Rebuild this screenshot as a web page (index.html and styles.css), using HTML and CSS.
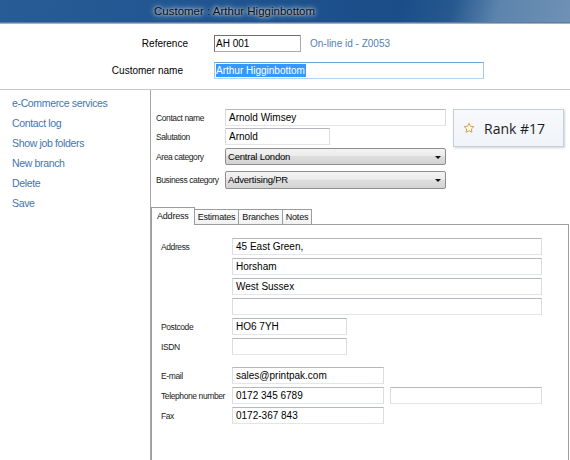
FILE: index.html
```html
<!DOCTYPE html>
<html>
<head>
  <title>Customer : Arthur Higginbottom</title>
  <link rel="stylesheet" href="styles.css">
</head>
<body>

<div class="titlebar">Customer : Arthur Higginbottom</div>

<div class="header">
  <div class="hdr-row">
    <span class="hdr-label">Reference</span>
    <div class="field ref-field">AH 001</div>
    <span class="online">On-line id - Z0053</span>
  </div>
  <div class="hdr-row">
    <span class="hdr-label short">Customer name</span>
    <div class="field name-field"><span class="sel">Arthur Higginbottom</span></div>
  </div>
</div>

<div class="main">
  <!-- left links -->
  <div class="sidebar">
    <a href="#">e-Commerce services</a>
    <a href="#">Contact log</a>
    <a href="#">Show job folders</a>
    <a href="#">New branch</a>
    <a href="#">Delete</a>
    <a href="#">Save</a>
  </div>

  <div class="content">
    <div class="top">
      <div class="contact-form">
        <div class="row">
          <span class="lbl">Contact name</span>
          <div class="field w-long">Arnold Wimsey</div>
        </div>
        <div class="row">
          <span class="lbl">Salutation</span>
          <div class="field w-short">Arnold</div>
        </div>
        <div class="row gap-s">
          <span class="lbl">Area category</span>
          <div class="select w-long">Central London<span class="arrow"></span></div>
        </div>
        <div class="row gap-m">
          <span class="lbl">Business category</span>
          <div class="select w-long tall">Advertising/PR<span class="arrow"></span></div>
        </div>
      </div>

      <div class="rank-card">
        <svg class="star" width="12" height="12" viewBox="0 0 24 24">
          <path d="M12 2.5l2.9 6.1 6.6.8-4.9 4.6 1.3 6.6L12 17.3l-5.9 3.3 1.3-6.6-4.9-4.6 6.6-.8z" fill="#fffbea" stroke="#c9993a" stroke-width="1.8" stroke-linejoin="round"/>
        </svg>
        <span>Rank #17</span>
      </div>
    </div>

    <div class="tabs">
      <div class="tab active">Address</div>
      <div class="tab">Estimates</div>
      <div class="tab">Branches</div>
      <div class="tab">Notes</div>
    </div>

    <div class="panel">
      <div class="row">
        <span class="lbl wide">Address</span>
        <div class="field w-addr">45 East Green,</div>
      </div>
      <div class="row">
        <span class="lbl wide"></span>
        <div class="field w-addr">Horsham</div>
      </div>
      <div class="row">
        <span class="lbl wide"></span>
        <div class="field w-addr">West Sussex</div>
      </div>
      <div class="row">
        <span class="lbl wide"></span>
        <div class="field w-addr"></div>
      </div>
      <div class="row">
        <span class="lbl wide">Postcode</span>
        <div class="field w-post">HO6 7YH</div>
      </div>
      <div class="row">
        <span class="lbl wide">ISDN</span>
        <div class="field w-post"></div>
      </div>
      <div class="row gap-l">
        <span class="lbl wide">E-mail</span>
        <div class="field w-mid">sales@printpak.com</div>
      </div>
      <div class="row">
        <span class="lbl wide">Telephone number</span>
        <div class="field w-mid">0172 345 6789</div>
        <div class="field w-mid extra"></div>
      </div>
      <div class="row">
        <span class="lbl wide">Fax</span>
        <div class="field w-mid">0172-367 843</div>
      </div>
    </div>
  </div>
</div>

</body>
</html>
```

FILE: styles.css
```css
body {
  margin: 0;
  width: 570px;
  height: 460px;
  overflow: hidden;
  background: #fff;
  font-family: "Liberation Sans", Arial, sans-serif;
  color: #000;
}

/* Title bar */
.titlebar {
  height: 22px;
  line-height: 22px;
  padding-left: 154px;
  font-size: 11.5px;
  color: #0d0d0d;
  text-shadow: 0 0 6px rgba(255,255,255,0.95), 0 0 3px rgba(255,255,255,0.8);
  background: linear-gradient(105deg, #285c96 0%, #1f5490 40%, #1b4d88 70%, #27598f 79%, #5d84ad 87%, #6f91b4 100%);
  border-bottom: 1px solid #5a7fa7;
}

/* Header */
.header {
  border-top: 1px solid #a6b1bd;
  padding: 11px 0 10px;
  border-bottom: 1px solid #c6c6c6;
}

.hdr-row {
  display: flex;
  align-items: center;
  height: 17px;
}

.hdr-row + .hdr-row {
  margin-top: 10px;
}

.hdr-label {
  width: 188px;
  margin-right: 26px;
  text-align: right;
  font-size: 10px;
}

.hdr-label.short {
  width: 183px;
  margin-right: 31px;
}

.field {
  box-sizing: border-box;
  height: 17px;
  line-height: 15px;
  padding-left: 3px;
  font-size: 10px;
  white-space: nowrap;
  border: 1px solid;
  border-color: #b4b8be #dadee3 #e2e5e9 #dadee3;
  background: #fff;
}

.ref-field {
  width: 87px;
  padding-left: 1px;
  border-color: #6e6e6e #a9a9a9 #a9a9a9 #6e6e6e;
}

.online {
  margin-left: 9px;
  font-size: 10px;
  color: #4f80b6;
}

.name-field {
  width: 270px;
  padding-left: 1px;
  border-color: #6ea0d4 #a9c7e6 #b5d0ec #a9c7e6;
}

.sel {
  background: #3399ff;
  color: #fff;
  padding: 1px 1px 1px 0;
}

/* Main area */
.main {
  display: flex;
  height: 370px;
}

.sidebar {
  box-sizing: border-box;
  width: 151px;
  padding-top: 3px;
  border-right: 1px solid #a8a8a8;
}

.sidebar a {
  display: block;
  padding-left: 12px;
  line-height: 20px;
  font-size: 10.5px;
  letter-spacing: -0.35px;
  color: #3f75ae;
  text-decoration: none;
}

.content {
  flex: 1;
  display: flex;
  flex-direction: column;
}

.top {
  display: flex;
  align-items: flex-start;
  padding: 19px 0 0 5px;
}

.contact-form {
  width: 290px;
}

.row {
  display: flex;
  align-items: center;
}

.contact-form .row + .row {
  margin-top: 2px;
}

.contact-form .row.gap-s {
  margin-top: 3px;
}

.contact-form .row.gap-m {
  margin-top: 6px;
}

.lbl {
  width: 69px;
  flex-shrink: 0;
  font-size: 8.5px;
  letter-spacing: -0.4px;
  color: #1a1a1a;
}

.lbl.wide {
  width: 71px;
}

.w-long { width: 221px; }
.w-short { width: 105px; }
.w-addr { width: 310px; }
.w-post { width: 115px; }
.w-mid { width: 152px; }

.extra {
  margin-left: 6px;
}

.select {
  position: relative;
  box-sizing: border-box;
  height: 17px;
  line-height: 15px;
  padding-left: 2px;
  font-size: 9.5px;
  letter-spacing: -0.2px;
  border: 1px solid #8d8d8d;
  border-radius: 2px;
  background: linear-gradient(#f3f3f3, #ececec 45%, #dedede 50%, #d2d2d2);
}

.select.tall {
  height: 18px;
  line-height: 16px;
}

.arrow {
  position: absolute;
  right: 4px;
  top: 50%;
  margin-top: -1px;
  border-left: 3px solid transparent;
  border-right: 3px solid transparent;
  border-top: 3px solid #111;
}

/* Rank card */
.rank-card {
  box-sizing: border-box;
  width: 111px;
  height: 38px;
  margin-left: 7px;
  display: flex;
  align-items: center;
  padding-left: 9px;
  font-family: "Open Sans", "Liberation Sans", sans-serif;
  font-size: 14px;
  color: #1c1c1c;
  background: linear-gradient(#f8f9fc, #f0f3f8);
  border: 1px solid #c6ceda;
  box-shadow: 1px 1px 2px rgba(120,130,150,0.35);
}

.star {
  margin-right: 9px;
}

/* Tabs */
.tabs {
  display: flex;
  align-items: flex-end;
  margin-top: 18px;
  margin-bottom: -1px;
  position: relative;
  z-index: 1;
}

.tab {
  box-sizing: border-box;
  height: 16px;
  line-height: 14px;
  padding: 0 3px;
  font-size: 9px;
  letter-spacing: -0.2px;
  color: #111;
  border: 1px solid #9c9c9c;
  border-left: none;
  background: linear-gradient(#fdfdfd, #f1f1f1);
}

.tab.active {
  height: 18px;
  line-height: 16px;
  padding: 0 5px;
  border-left: 1px solid #9c9c9c;
  border-bottom: none;
  background: #fff;
}

.panel {
  flex: 1;
  margin-right: 1px;
  padding: 13px 0 0 9px;
  border: 1px solid #a0a0a0;
  border-bottom: none;
}

.panel .row + .row {
  margin-top: 3px;
}

.panel .row.gap-l {
  margin-top: 12px;
}
```
